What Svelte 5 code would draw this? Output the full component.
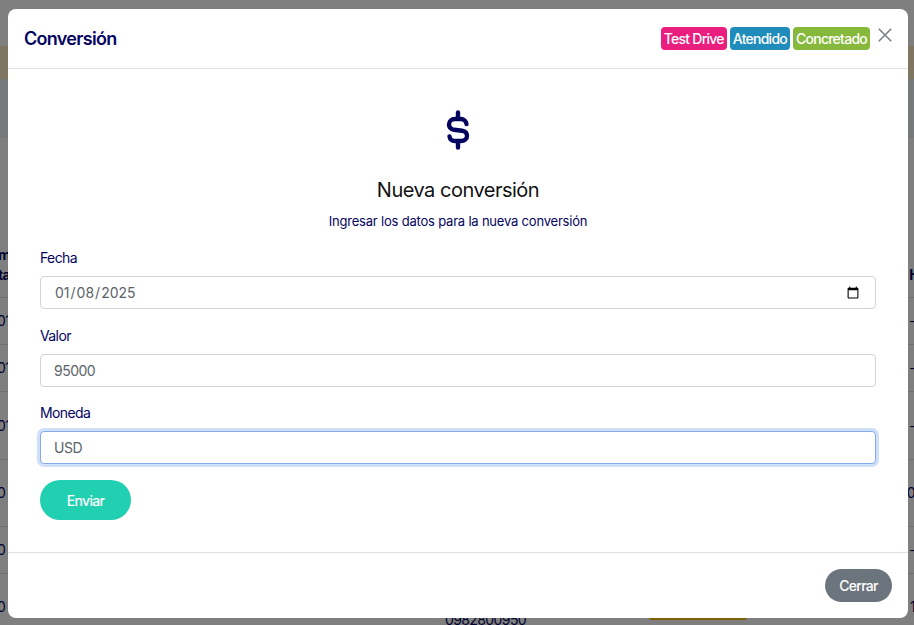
<script lang="ts">
	let fecha = $state('2025-01-08');
	let valor = $state('95000');
	let moneda = $state('USD');

	const tags = [
		{ label: 'Test Drive', color: '#e91e7f' },
		{ label: 'Atendido', color: '#1f8cbc' },
		{ label: 'Concretado', color: '#86b93b' },
	];

	// what shows of the table behind the modal
	const rows = [
		{ height: 47, left: '01', right: '-' },
		{ height: 47, left: '01', right: '-' },
		{ height: 68, left: '01', right: '-' },
		{ height: 67, left: '0', right: '0' },
		{ height: 47, left: '0', right: '-' },
		{ height: 67, left: '0', right: '1', phone: '0982800950' },
	];
</script>

<div class="page">
	<div class="band"></div>
	<div class="panel"></div>
	<div class="table">
		<div class="table-head">
			<span>m<br />ta</span>
			<span>H</span>
		</div>
		{#each rows as row}
			<div class="table-row" style={`height: ${row.height}px`}>
				<span class="cell-left">{row.left}</span>
				{#if row.phone}
					<span class="phone">{row.phone}</span>
					<span class="badge"></span>
				{/if}
				<span class="cell-right">{row.right}</span>
			</div>
		{/each}
	</div>
	<div class="backdrop"></div>

	<div class="modal">
		<header class="modal-header">
			<h1>Conversión</h1>
			<div class="tags">
				{#each tags as tag}
					<span class="tag" style={`background: ${tag.color}`}>{tag.label}</span>
				{/each}
			</div>
			<button class="close" aria-label="Cerrar">
				<svg width="16" height="16" viewBox="0 0 16 16" fill="none" stroke="#7a7f85" stroke-width="1.6">
					<path d="M1.8 1.800l12.400 12.400M14.200 1.800L1.800 14.200" />
				</svg>
			</button>
		</header>

		<div class="modal-body">
			<div class="intro">
				<svg class="dollar" width="40" height="40" viewBox="0 0 40 40" fill="none" stroke="#04045f" stroke-width="4.400" stroke-linecap="round" stroke-linejoin="round">
					<path d="M20 2.500v5M20 32.500v5" />
					<path d="M28.500 14C28 11 25.500 9 23 9h-6c-3.500 0-6 2.500-6 5.500 0 3 2.200 4.800 5 5.300l8 .900c3 .5 5 2.300 5 5.300 0 3-2.500 5-6 5h-6c-3 0-5-1.500-5.500-4.500" />
				</svg>
				<h2>Nueva conversión</h2>
				<p>Ingresar los datos para la nueva conversión</p>
			</div>

			<form>
				<label>
					<span>Fecha</span>
					<input class="date" type="date" bind:value={fecha} />
				</label>
				<label>
					<span>Valor</span>
					<input type="text" bind:value={valor} />
				</label>
				<label>
					<span>Moneda</span>
					<input class="focused" type="text" bind:value={moneda} />
				</label>
				<button type="button" class="send">Enviar</button>
			</form>
		</div>

		<footer class="modal-footer">
			<button type="button" class="dismiss">Cerrar</button>
		</footer>
	</div>
</div>

<style>
	:global(body) {
		margin: 0;
		font-family: Inter, 'Liberation Sans', sans-serif;
	}

	.page {
		position: relative;
		height: 625px;
		overflow: hidden;
		background: #fff;
		display: flow-root;
	}

	.band {
		height: 33px;
		margin-top: 46px;
		background: #fdecc0;
	}

	.panel {
		height: 59px;
		background: #eef4f6;
	}

	.table {
		margin-top: 108px;
		font-size: 14px;
		line-height: 20px;
		letter-spacing: -0.6px;
		color: #04045f;
	}

	.table-head {
		display: flex;
		justify-content: space-between;
		align-items: flex-end;
		height: 52px;
		box-sizing: border-box;
		padding: 0 0 12px 0;
		margin-left: -2px;
		margin-right: -5px;
		border-bottom: 1px solid #dee2e6;
		font-weight: 700;
	}

	.table-row {
		display: flex;
		align-items: center;
		box-sizing: border-box;
		border-bottom: 1px solid #dee2e6;
	}

	.cell-left {
		margin-left: -3px;
	}

	.phone {
		position: absolute;
		left: 445px;
		top: 610px;
	}

	.badge {
		position: absolute;
		left: 649px;
		top: 614px;
		width: 98px;
		height: 6px;
		border-radius: 4px;
		background: #ffc107;
	}

	.cell-right {
		margin-left: auto;
		margin-right: -1px;
	}

	.backdrop {
		position: absolute;
		inset: 0;
		background: rgba(0, 0, 0, 0.5);
	}

	.modal {
		position: absolute;
		left: 8px;
		top: 9px;
		width: 900px;
		height: 609px;
		display: flex;
		flex-direction: column;
		background: #fff;
		border-radius: 8px;
	}

	.modal-header {
		display: flex;
		align-items: flex-start;
		height: 60px;
		box-sizing: border-box;
		padding: 17px 15px 0 16px;
		border-bottom: 1px solid #dee2e6;
	}

	h1 {
		flex: 1;
		margin: 2px 0 0;
		font-size: 18px;
		font-weight: 600;
		line-height: 22px;
		letter-spacing: -0.7px;
		color: #04045f;
	}

	.tags {
		display: flex;
		gap: 3px;
		margin-top: 1px;
	}

	.tag {
		padding: 0 3px;
		border-radius: 4px;
		font-size: 14px;
		font-weight: 500;
		line-height: 23px;
		letter-spacing: -0.75px;
		color: #fff;
		white-space: nowrap;
	}

	.close {
		width: 16px;
		height: 16px;
		margin: 1px 0 0 7px;
		padding: 0;
		border: 0;
		background: none;
	}

	.modal-body {
		flex: 1;
		padding: 0 32px;
	}

	.intro {
		display: flex;
		flex-direction: column;
		align-items: center;
		padding-top: 41px;
	}

	.dollar {
		display: block;
	}

	h2 {
		margin: 28px 0 0;
		font-size: 20px;
		font-weight: 400;
		line-height: 24px;
		letter-spacing: -0.5px;
		color: #111;
	}

	.intro p {
		margin: 9px 0 0;
		font-size: 13px;
		line-height: 20px;
		letter-spacing: -0.2px;
		color: #04045f;
	}

	form {
		display: flex;
		flex-direction: column;
		align-items: flex-start;
		margin-top: 16px;
	}

	label {
		display: block;
		width: 100%;
		margin-bottom: 15.5px;
	}

	label span {
		display: block;
		margin-bottom: 8px;
		font-size: 14px;
		line-height: 21px;
		letter-spacing: -0.6px;
		color: #04045f;
	}

	input {
		display: block;
		width: 100%;
		height: 33px;
		box-sizing: border-box;
		padding: 0 13px;
		border: 1px solid #ced4da;
		border-radius: 4px;
		outline: none;
		font-family: inherit;
		font-size: 14px;
		letter-spacing: -0.5px;
		color: #5c636a;
		background: #fff;
	}

	input.date {
		letter-spacing: 0;
	}

	input.focused {
		border-color: #86a9e8;
		box-shadow: 0 0 0 3px #cfe0fa;
	}

	.send {
		width: 91px;
		height: 40px;
		margin-top: 0.5px;
		border: 0;
		border-radius: 20px;
		background: #20d0b0;
		color: #fff;
		font-family: inherit;
		font-size: 14px;
		font-weight: 500;
		letter-spacing: -0.7px;
	}

	.modal-footer {
		display: flex;
		justify-content: flex-end;
		height: 66px;
		box-sizing: border-box;
		padding: 16px 16px 0 0;
		border-top: 1px solid #dee2e6;
	}

	.dismiss {
		width: 67px;
		height: 33px;
		border: 0;
		border-radius: 17px;
		background: #6c757d;
		color: #fff;
		font-family: inherit;
		font-size: 14px;
		font-weight: 500;
		letter-spacing: -0.7px;
	}
</style>
